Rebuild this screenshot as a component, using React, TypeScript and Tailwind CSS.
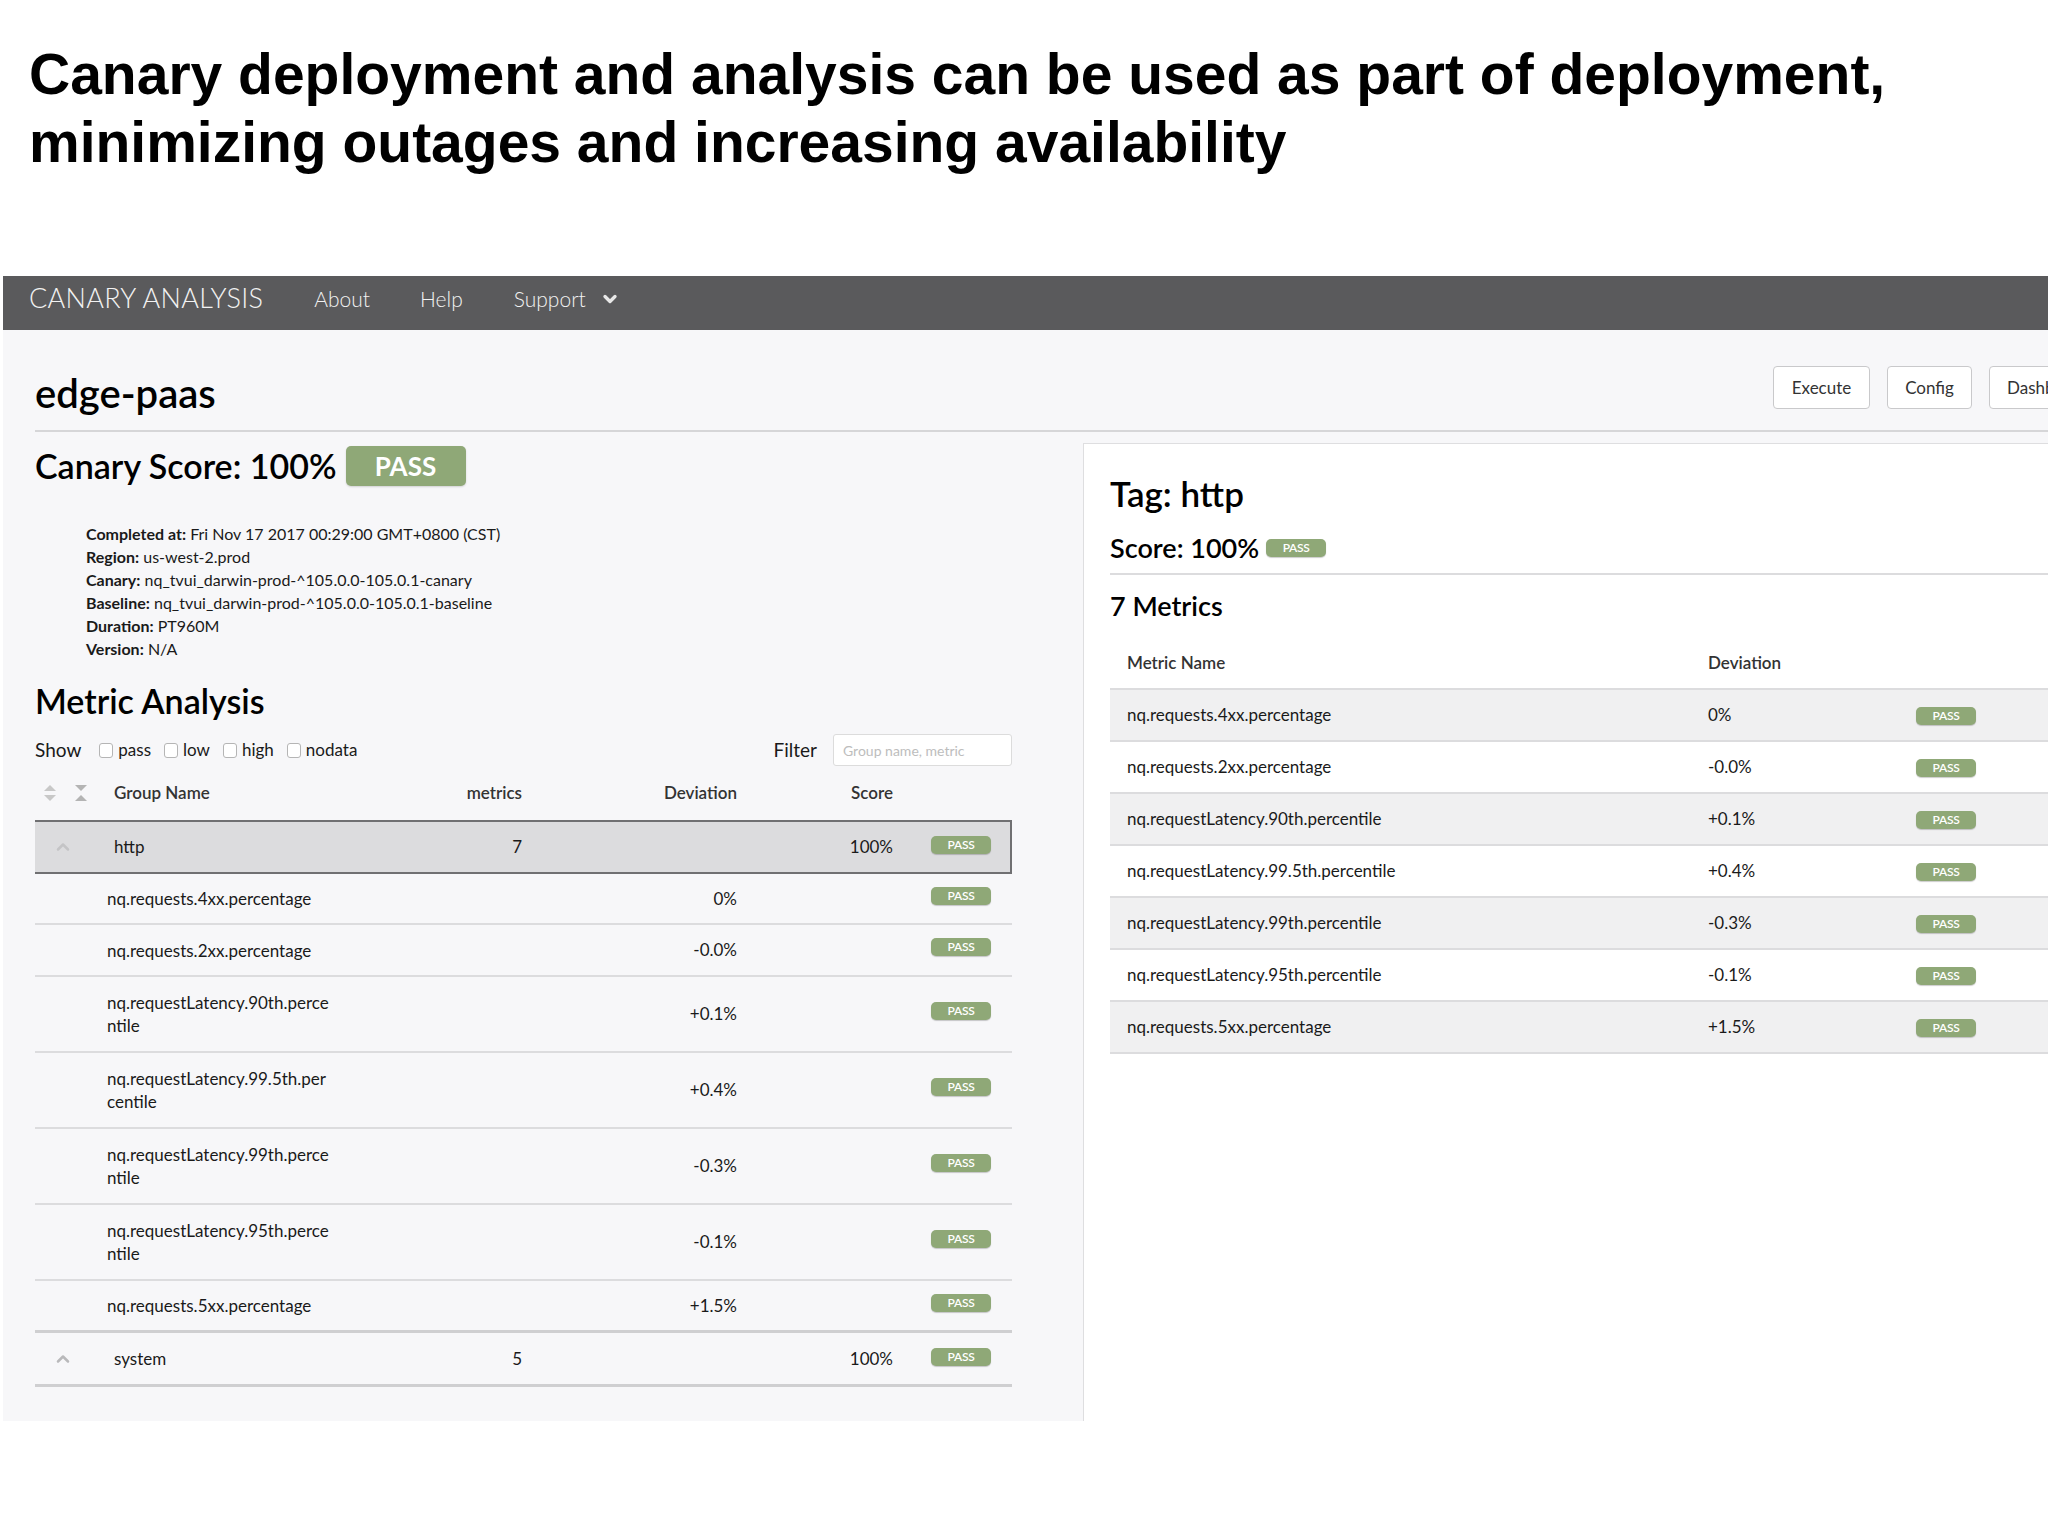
import { ChevronDown, ChevronUp } from 'lucide-react'

type SubRow = { name: string[]; dev: string }

const groupMetrics: SubRow[] = [
  { name: ['nq.requests.4xx.percentage'], dev: '0%' },
  { name: ['nq.requests.2xx.percentage'], dev: '-0.0%' },
  { name: ['nq.requestLatency.90th.perce', 'ntile'], dev: '+0.1%' },
  { name: ['nq.requestLatency.99.5th.per', 'centile'], dev: '+0.4%' },
  { name: ['nq.requestLatency.99th.perce', 'ntile'], dev: '-0.3%' },
  { name: ['nq.requestLatency.95th.perce', 'ntile'], dev: '-0.1%' },
  { name: ['nq.requests.5xx.percentage'], dev: '+1.5%' },
]

const tagMetrics = [
  { name: 'nq.requests.4xx.percentage', dev: '0%' },
  { name: 'nq.requests.2xx.percentage', dev: '-0.0%' },
  { name: 'nq.requestLatency.90th.percentile', dev: '+0.1%' },
  { name: 'nq.requestLatency.99.5th.percentile', dev: '+0.4%' },
  { name: 'nq.requestLatency.99th.percentile', dev: '-0.3%' },
  { name: 'nq.requestLatency.95th.percentile', dev: '-0.1%' },
  { name: 'nq.requests.5xx.percentage', dev: '+1.5%' },
]

const details = [
  ['Completed at:', 'Fri Nov 17 2017 00:29:00 GMT+0800 (CST)'],
  ['Region:', 'us-west-2.prod'],
  ['Canary:', 'nq_tvui_darwin-prod-^105.0.0-105.0.1-canary'],
  ['Baseline:', 'nq_tvui_darwin-prod-^105.0.0-105.0.1-baseline'],
  ['Duration:', 'PT960M'],
  ['Version:', 'N/A'],
]

function Pass({ big = false }: { big?: boolean }) {
  return big ? (
    <span className="inline-flex h-[40px] w-[120px] items-center justify-center rounded-[5px] bg-[#8fa877] text-[26px] font-bold text-white shadow-[0_1px_2px_rgba(0,0,0,0.15)]">
      PASS
    </span>
  ) : (
    <span className="inline-flex h-[18px] w-[60px] items-center justify-center rounded-[5px] bg-[#8fa877] text-[12px] font-semibold tracking-tight text-white shadow-[0_1px_1px_rgba(0,0,0,0.2)]">
      PASS
    </span>
  )
}

function SortIcons() {
  return (
    <div className="flex items-center gap-[17px] pl-[8px]">
      <svg width="14" height="20" viewBox="0 0 14 20">
        <polygon points="7,2 13,8 1,8" fill="#c8c8c8" />
        <polygon points="1,12 13,12 7,18" fill="#c8c8c8" />
      </svg>
      <svg width="14" height="20" viewBox="0 0 14 20">
        <polygon points="1,2 13,2 7,8" fill="#b4b4b4" />
        <polygon points="7,12 13,18 1,18" fill="#b4b4b4" />
      </svg>
    </div>
  )
}

function Checkbox({ label }: { label: string }) {
  return (
    <label className="flex items-center gap-[5px]">
      <span className="h-[15px] w-[14px] rounded-[3px] border border-[#b5b5b5] bg-white" />
      <span>{label}</span>
    </label>
  )
}

export default function App() {
  return (
    <div className="h-[1536px] w-[2048px] overflow-hidden bg-white font-['Lato',sans-serif] text-[#1a1a1a]">
      <h1 className="pl-[29px] pt-[40px] font-['Liberation_Sans',Arial,sans-serif] text-[57px] font-bold leading-[68px] text-black">
        Canary deployment and analysis can be used as part of deployment,
        <br />
        minimizing outages and increasing availability
      </h1>

      <div className="ml-[3px] mt-[100px]">
        <nav className="flex h-[54px] items-center bg-[#5a5a5c] pb-[9px] pl-[26px] text-[#f2f2f2]">
          <span className="text-[27px] font-light tracking-[0.3px]">CANARY ANALYSIS</span>
          <span className="ml-[51px] text-[21px] font-light">About</span>
          <span className="ml-[50px] text-[21px] font-light">Help</span>
          <span className="ml-[51px] flex items-center gap-[14px] text-[21px] font-light">
            Support
            <ChevronDown size={20} strokeWidth={4} className="text-[#e8e8e8]" />
          </span>
        </nav>

        <div className="h-[1091px] bg-[#f7f7f9] pl-[32px]">
          <div className="flex h-[102px] items-start border-b-2 border-[#d6d6d8] pt-[36px]">
            <div className="w-[1738px] flex-none pt-[5px] text-[40px] font-semibold leading-[44px] text-black">
              edge-paas
            </div>
            <div className="flex flex-none gap-[17px] text-[17px] text-[#333]">
              <button className="h-[43px] w-[97px] rounded-[4px] border border-[#c9c9cb] bg-white">Execute</button>
              <button className="h-[43px] w-[85px] rounded-[4px] border border-[#c9c9cb] bg-white">Config</button>
              <button className="h-[43px] w-[120px] rounded-[4px] border border-[#c9c9cb] bg-white pl-[17px] text-left">
                Dashboard
              </button>
            </div>
          </div>

          <div className="flex h-[989px]">
            <div className="w-[977px] flex-none">
              <div className="mt-[14px] flex items-center gap-[9px]">
                <span className="text-[34px] font-semibold leading-[40px] text-black">Canary Score: 100%</span>
                <Pass big />
              </div>

              <div className="mt-[36px] pl-[51px] text-[16px] leading-[23px] text-[#1a1a1a]">
                {details.map(([k, v]) => (
                  <div key={k}>
                    <span className="font-bold">{k}</span> {v}
                  </div>
                ))}
              </div>

              <h2 className="mt-[20px] text-[34px] font-semibold leading-[42px] text-black">Metric Analysis</h2>

              <div className="mt-[12px] flex h-[32px] items-center">
                <span className="mr-[18px] text-[19px]">Show</span>
                <div className="flex items-center gap-[13px] text-[17px]">
                  <Checkbox label="pass" />
                  <Checkbox label="low" />
                  <Checkbox label="high" />
                  <Checkbox label="nodata" />
                </div>
                <span className="ml-auto mr-[16px] text-[19px]">Filter</span>
                <div className="flex h-[32px] w-[179px] items-center rounded-[3px] border border-[#dcdcdc] bg-white pl-[9px] text-[14px] text-[#bdbdbd]">
                  Group name, metric
                </div>
              </div>

              <div className="grid h-[54px] grid-cols-[79px_286px_122px_215px_156px_119px] items-center text-[17px] font-semibold text-[#333]">
                <SortIcons />
                <span>Group Name</span>
                <span className="text-right">metrics</span>
                <span className="text-right">Deviation</span>
                <span className="text-right">Score</span>
                <span />
              </div>

              <div className="grid h-[54px] grid-cols-[79px_286px_122px_215px_156px_119px] items-center border-y-2 border-r-2 border-[#707072] bg-[#dcdcde] text-[17px]">
                <ChevronUp size={20} strokeWidth={3} className="ml-[18px] text-[#c4c4c6]" />
                <span>http</span>
                <span className="text-right">7</span>
                <span />
                <span className="text-right">100%</span>
                <span className="-mt-[8px] pl-[38px]">
                  <Pass />
                </span>
              </div>

              {groupMetrics.map((m, i) => (
                <div
                  key={m.name.join('')}
                  className={
                    'grid grid-cols-[72px_415px_215px_156px_119px] items-center text-[17px] ' +
                    (m.name.length > 1 ? 'h-[76px] ' : i === 0 ? 'h-[51px] ' : 'h-[52px] ') +
                    (i === groupMetrics.length - 1 ? 'border-b-[3px] border-[#cfcfd1]' : 'border-b-2 border-[#dcdcde]')
                  }
                >
                  <span />
                  <span className="leading-[23px]">
                    {m.name.map((l) => (
                      <div key={l}>{l}</div>
                    ))}
                  </span>
                  <span className="text-right">{m.dev}</span>
                  <span />
                  <span className="-mt-[10px] pl-[38px]">
                    <Pass />
                  </span>
                </div>
              ))}

              <div className="grid h-[54px] grid-cols-[79px_286px_122px_215px_156px_119px] items-center border-b-[3px] border-[#cfcfd1] text-[17px]">
                <ChevronUp size={20} strokeWidth={3} className="ml-[18px] text-[#b9b9bb]" />
                <span>system</span>
                <span className="text-right">5</span>
                <span />
                <span className="text-right">100%</span>
                <span className="-mt-[8px] pl-[38px]">
                  <Pass />
                </span>
              </div>
            </div>

            <div className="ml-[71px] mt-[11px] w-[1100px] flex-none border-l border-t border-[#dedee0] bg-white pl-[26px]">
              <div className="border-b-2 border-[#dcdcde] pb-[10px]">
                <div className="pt-[28px] text-[35px] font-semibold leading-[42px] text-black">Tag: http</div>
                <div className="mt-[19px] flex h-[30px] items-center gap-[7px]">
                  <span className="text-[27px] font-semibold text-black">Score: 100%</span>
                  <Pass />
                </div>
              </div>
              <div className="mt-[14px] text-[27px] font-semibold leading-[34px] text-black">7 Metrics</div>

              <div className="mt-[15px]">
                <div className="grid h-[52px] grid-cols-[598px_208px_1fr] items-center border-b-2 border-[#dcdcde] text-[17px] font-semibold text-[#333]">
                  <span className="pl-[17px]">Metric Name</span>
                  <span>Deviation</span>
                  <span />
                </div>
                {tagMetrics.map((m, i) => (
                  <div
                    key={m.name}
                    className={
                      'grid h-[52px] grid-cols-[598px_208px_1fr] items-center border-b-2 border-[#dcdcde] text-[17px] ' +
                      (i % 2 === 0 ? 'bg-[#f0f0f1]' : 'bg-white')
                    }
                  >
                    <span className="pl-[17px]">{m.name}</span>
                    <span>{m.dev}</span>
                    <span className="-mt-[2px]">
                      <Pass />
                    </span>
                  </div>
                ))}
              </div>
            </div>
          </div>
        </div>
      </div>
    </div>
  )
}
